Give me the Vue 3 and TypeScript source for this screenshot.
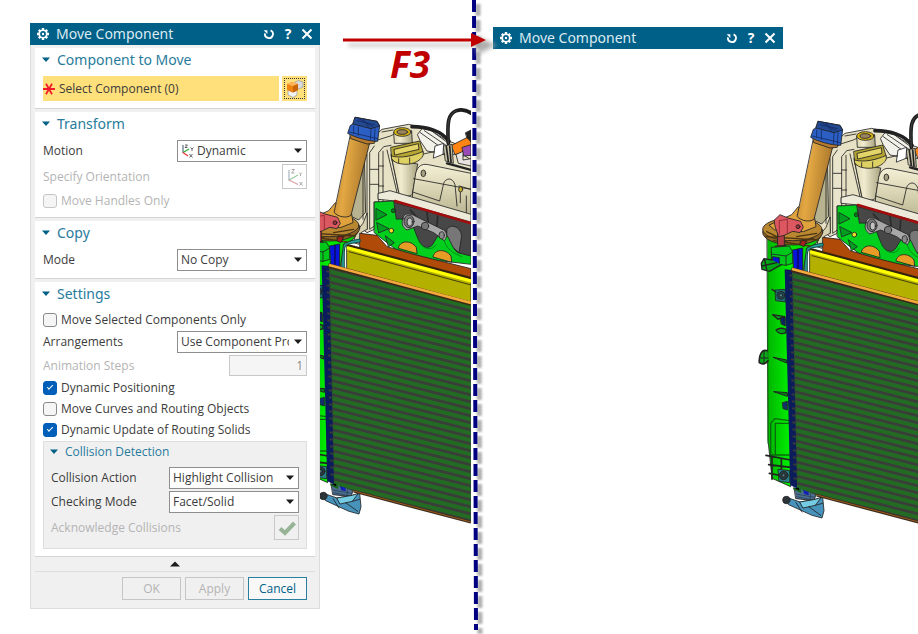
<script setup lang="ts">
import { ref } from 'vue'

interface Stripe {
  x1: number
  y1: number
  x2: number
  y2: number
}

const motion = ref('Dynamic')
const copyMode = ref('No Copy')
const handlesOnly = ref(false)
const selectedOnly = ref(false)
const arrangement = ref('Use Component Properties')
const steps = ref(1)
const dynamicPositioning = ref(true)
const moveCurves = ref(false)
const dynamicUpdate = ref(true)
const collisionAction = ref('Highlight Collision')
const checkingMode = ref('Facet/Solid')

// Fins of the radiator core, drawn parallel and clipped to the core outline
const fins: Stripe[] = Array.from({ length: 36 }, (_, i) => ({
  x1: 120,
  y1: 544 + i * 21,
  x2: 560,
  y2: 656 + i * 21,
}))

// Short teeth along the navy side plate
const teeth: number[] = Array.from({ length: 30 }, (_, i) => 556 + i * 21)
</script>

<template>
  <main class="page">
    <svg class="defs" aria-hidden="true">
      <defs>
        <linearGradient id="tube" x1="0" x2="1" y1="0" y2=".25">
          <stop offset="0" stop-color="#b87f2c" />
          <stop offset=".4" stop-color="#e3a843" />
          <stop offset="1" stop-color="#a8742a" />
        </linearGradient>
        <linearGradient id="neck" x1="0" x2="1">
          <stop offset="0" stop-color="#dcd6b2" />
          <stop offset=".35" stop-color="#f1ecd0" />
          <stop offset="1" stop-color="#a9a480" />
        </linearGradient>
        <linearGradient id="dome" x1="0" x2="0" y1="0" y2="1">
          <stop offset="0" stop-color="#f4f0d6" />
          <stop offset=".45" stop-color="#dad5b4" />
          <stop offset="1" stop-color="#b5b08c" />
        </linearGradient>
        <linearGradient id="tank" x1="0" x2="1">
          <stop offset="0" stop-color="#00b400" />
          <stop offset=".4" stop-color="#00ec00" />
          <stop offset="1" stop-color="#00d000" />
        </linearGradient>
        <clipPath id="core-clip">
          <path d="M124 542L552 655V1308L200 1216L138 1190Z" />
        </clipPath>
        <symbol id="model" viewBox="0 0 552 1350">
          <g stroke="#222" stroke-width="2.5" stroke-linejoin="round" stroke-linecap="round">
            <!-- engine housing -->
            <path d="M240 185L262 150L285 130L365 115L420 128L484 165L552 190V420L324 350L262 348V430L240 440L190 400V345Z" fill="#e7e2c6" />
            <path d="M232 220L190 345V390L215 402L235 380Z" fill="#b7b28f" />
            <path d="M262 180L248 200V430L262 420V348H275V200L290 182L312 178" fill="#e9e5cc" />
            <path d="M228 230V400M240 205V430M288 196V345M300 192L330 320M312 205L335 318M250 250H275M250 295H275M262 165L310 150L330 140M285 138L318 132M275 240H290M275 300H290" fill="none" />
            <path d="M392 145L405 128L430 132L482 170L478 205L420 195L400 165Z" fill="#f3f2ea" />
            <path d="M400 140L470 190M412 134L480 180M405 205L450 195L480 210L520 200L552 222" fill="none" />
            <!-- hoses -->
            <path d="M375 122C420 122 465 135 486 166" fill="none" stroke="#222" stroke-width="11" />
            <path d="M484 172C480 105 484 84 508 74C528 68 543 74 556 84" fill="none" stroke="#1d1d1d" stroke-width="11" />
            <path d="M484 172C480 105 484 84 508 74" fill="none" stroke="#555" stroke-width="2" />
            <path d="M494 178L545 152L552 172V190L505 206Z" fill="#ff8414" />
            <path d="M536 140L552 132V166L540 156Z" fill="#222" />
            <path d="M526 184L552 176V208L530 210Z" fill="#9a4bb5" />
            <path d="M508 205L528 196V222L552 218V240L515 232Z" fill="#e8e3e0" />
            <path d="M470 180L495 175L499 232L476 225Z" fill="#c9c4a8" />
            <path d="M478 182L484 226M488 180L492 228" stroke="#222" stroke-width="5" />
            <path d="M445 180L470 172L468 205L440 216Z" fill="#fff" />
            <path d="M480 232L552 252" stroke="#222" stroke-width="7" />
            <!-- filler openings -->
            <path d="M320 140L322 172H376L374 135Z" fill="url(#neck)" />
            <ellipse cx="346" cy="138" rx="26" ry="13" fill="#d8b515" />
            <ellipse cx="346" cy="138" rx="16" ry="7" fill="#9b8460" />
            <path d="M316 225L336 322C352 334 368 332 376 325L392 235Z" fill="url(#neck)" />
            <path d="M312 184L398 165L409 200L316 224Z" fill="#b6a532" />
            <path d="M322 190L394 173L396 190L324 207Z" fill="#e3d568" />
            <path d="M314 210C340 218 380 210 408 196L409 207C400 228 370 238 345 234C330 233 318 226 314 218Z" fill="#ded163" />
            <path d="M335 218V231M368 216V232" fill="none" />
            <!-- expansion tank -->
            <path d="M377 320L386 262C392 240 404 232 424 236L552 262V396L377 345Z" fill="url(#dome)" />
            <path d="M377 318L458 345L470 292C476 276 496 272 504 296L510 360M380 278L552 310M516 300L552 310M520 318V350M538 330V392" fill="none" />
            <ellipse cx="409" cy="262" rx="7" ry="10" fill="#a5a080" />
            <ellipse cx="521" cy="310" rx="6" ry="8" fill="#c9b32e" />
            <path d="M274 322L309 314L552 385V408L324 345L274 340Z" fill="#edead9" />
            <!-- block interior -->
            <path d="M324 350L552 412V530L380 490L324 420Z" fill="#474747" />
            <path d="M324 345L552 412" stroke="#a20c0c" stroke-width="8" />
            <path d="M370 372L395 400M420 380L425 420M452 390L450 420" stroke="#2b2b2b" stroke-width="5" />
            <path d="M480 430C490 412 520 420 524 450L516 500L480 470Z" fill="#777" />
            <path d="M262 348L320 345L328 400C350 395 366 410 380 425C392 455 398 482 420 484C445 484 440 450 468 440C490 448 488 480 512 500L552 510V535L440 522L340 500L300 470L262 440Z" fill="#00cf1e" />
            <path d="M268 368L300 386L268 402ZM270 410L306 428L276 440ZM296 450L322 470L305 482Z" fill="#009e20" />
            <path d="M392 456C400 486 430 500 448 476M470 455C474 490 500 502 525 512" fill="none" stroke="#0a7c18" />
            <circle cx="319" cy="374" r="6" fill="#007f18" />
            <circle cx="313" cy="434" r="7" fill="#f1e12a" />
            <path d="M348 398C348 382 366 380 380 388L470 432C482 440 480 456 472 464L440 440L392 420L360 432C346 424 342 410 348 398Z" fill="#a8a8a8" />
            <ellipse cx="366" cy="406" rx="15" ry="19" fill="#777" />
            <ellipse cx="368" cy="408" rx="8" ry="12" fill="#c2c2c2" />
            <circle cx="414" cy="420" r="11" fill="#777" />
            <ellipse cx="464" cy="448" rx="8" ry="11" fill="#888" />
            <path d="M334 486C338 464 370 460 388 484L390 502ZM438 512C442 490 474 486 492 510L494 528Z" fill="#e79c26" />
            <!-- bracket and shroud -->
            <path d="M240 382L228 412L206 440L200 470L216 475L222 440L240 430Z" fill="#d8d2b0" />
            <path d="M219 442L270 448L300 482L380 505L552 548V580L380 540L219 488Z" fill="#b04a08" />
            <path d="M180 482L552 586V660L180 560Z" fill="#b3b000" />
            <path d="M182 478L552 577" stroke="#33250b" stroke-width="8" />
            <path d="M184 486L552 585" stroke="#ffff00" stroke-width="10" />
            <path d="M186 497L552 597" stroke="#44400a" stroke-width="3" />
            <path d="M216 464L184 470C170 474 168 484 168 500V548" fill="none" stroke="#174f4c" stroke-width="11" />
            <path d="M216 464L184 470C170 474 168 484 168 500V548" fill="none" stroke="#27a095" stroke-width="5" />
            <!-- left tank -->
            <path d="M52 440H212L196 462L170 474L160 545L112 545L122 1190L66 1165L54 1050Z" fill="url(#tank)" />
            <path d="M128 480L158 474V545L132 538Z" fill="#0713d8" />
            <path d="M144 478V540" stroke="#0a0a55" stroke-width="4" />
            <ellipse cx="128" cy="427" rx="90" ry="38" fill="#8c6122" />
            <ellipse cx="127" cy="418" rx="89" ry="34" fill="#b98730" />
            <path d="M58 405L125 374L145 350L194 384L198 410L160 425L75 420Z" fill="#dfa23c" />
            <path d="M48 440L205 450M70 452L180 468M50 425L110 455M140 440L200 430M150 456L190 446" stroke="#4c3510" stroke-width="4" fill="none" />
            <!-- filler tube -->
            <path d="M190 152L249 167L192 388C178 398 152 392 142 380Z" fill="url(#tube)" />
            <path d="M188 140L268 158L262 172L240 174L192 158Z" fill="#b77b2f" />
            <path d="M205 94L270 106L278 120L272 166C240 166 200 152 182 142L190 118L198 114Z" fill="#2b5fc4" />
            <path d="M205 94L270 106L278 120L252 128L198 114Z" fill="#234993" />
            <path d="M200 120V142M214 122V148M252 130L250 162M264 128L262 164M210 104L262 116M215 98L258 122M228 98L245 124M186 138L272 158" fill="none" stroke="#142b63" />
            <!-- side fitting -->
            <path d="M84 425H103V470H84Z" fill="#b13d44" />
            <path d="M73 390L90 374L114 384L152 394L160 412L150 428L128 424L103 436L86 440L76 412Z" fill="#dc5860" />
            <path d="M88 392L112 388V430M88 392V432" fill="none" stroke="#8d2830" />
            <circle cx="144" cy="410" r="6" fill="#9b3037" />
            <path d="M76 468L108 466L116 478L84 482ZM156 450L170 454L162 470L150 464Z" fill="#a32020" />
            <path d="M65 472L118 468L128 486V520L108 526L66 520Z" fill="#00c81b" />
            <path d="M65 492L108 498L128 486M108 498V526" fill="none" />
            <path d="M69 500L88 503V524L69 521Z" fill="#0714d4" />
            <path d="M66 510L42 506L34 520L36 538L58 544L94 524" fill="#00a516" stroke-width="4" />
            <path d="M36 528L80 518M44 508L50 540" fill="none" stroke-width="4" />
            <!-- tank details -->
            <path d="M54 540V1060" stroke="#087908" />
            <path d="M76 600L106 598V636L78 632Z" fill="#207078" />
            <circle cx="93" cy="616" r="12" fill="#24464f" />
            <circle cx="93" cy="616" r="5" fill="#4c8995" />
            <path d="M66 598L78 606M68 674L104 680L84 688ZM78 720C88 712 98 714 108 718V728C96 734 84 730 78 720Z" fill="#079c1a" stroke-width="4" />
            <path d="M92 684L106 682V708L94 702Z" fill="#11255d" />
            <path d="M52 782C36 776 26 796 28 818C38 826 50 820 54 812" fill="#0caa1a" stroke-width="5" />
            <path d="M42 784V820M28 804H54" stroke-width="3" />
            <path d="M70 802L110 810V818ZM72 905L112 908V918Z" fill="#0a7716" stroke-width="3" />
            <path d="M98 938L112 934V960L100 956Z" fill="#12306b" />
            <path d="M62 1100V1000L74 986L118 992M76 1096V1000H118M62 1095H120" fill="none" stroke="#096b0c" stroke-width="4" />
            <path d="M48 1096L122 1110M56 1124L122 1132M58 1150L100 1158M66 1100V1168M94 1106V1150" fill="none" stroke-width="5" />
            <path d="M85 1138L119 1142V1178L88 1174Z" fill="#2a7f8c" />
            <circle cx="101" cy="1156" r="13" fill="#263b42" />
            <circle cx="101" cy="1156" r="5" fill="#567880" />
            <!-- lower mount -->
            <path d="M132 1186L200 1208L192 1232L138 1226Z" fill="#4d6f92" />
            <path d="M132 1196L152 1206L148 1190M158 1198L172 1212" stroke="#17651a" stroke-width="5" />
            <path d="M138 1212L194 1222M140 1220L190 1230M182 1208L180 1230" stroke="#2c4258" />
            <path d="M160 1200L176 1204V1216L162 1212Z" fill="#1220b8" stroke="none" />
            <path d="M110 1222L150 1236L196 1228L218 1222L222 1262L216 1284L186 1276L116 1244Z" fill="#4793bb" />
            <path d="M150 1236L196 1228L214 1222L196 1246L160 1254Z" fill="#75cce2" />
            <path d="M138 1238L156 1266M176 1250L212 1276M196 1246L218 1240" fill="none" />
            <circle cx="109" cy="1230" r="11" fill="#2c343a" />
          </g>
          <!-- radiator core -->
          <path d="M124 542L552 655V1308L200 1216L138 1190Z" fill="#236b23" />
          <g clip-path="url(#core-clip)" stroke="#3a3d3a" stroke-width="8">
            <line v-for="(f, i) in fins" :key="i" :x1="f.x1" :y1="f.y1" :x2="f.x2" :y2="f.y2" />
          </g>
          <path d="M104 538L126 540L141 1194L121 1186Z" fill="#0b1c5c" />
          <g stroke="#34393a" stroke-width="6">
            <line v-for="(y, i) in teeth" :key="i" :x1="118 + i * 0.42" :y1="y" :x2="130 + i * 0.42" :y2="y + 2" />
          </g>
          <path d="M124 538L552 653" stroke="#3a2a12" stroke-width="13" />
          <path d="M126 537L552 651" stroke="#f4a83d" stroke-width="8" />
          <path d="M200 1216L552 1309" stroke="#3a2c1c" stroke-width="8" />
          <path d="M200 1215L552 1308" stroke="#9c5a1c" stroke-width="3" />
        </symbol>
        <symbol id="gear" viewBox="0 0 14 14">
          <path d="M7 1V13M1 7H13M2.8 2.8L11.2 11.2M11.2 2.8L2.8 11.2" stroke="#fff" stroke-width="2.4" />
          <circle cx="7" cy="7" r="4.6" fill="#fff" />
          <circle cx="7" cy="7" r="2.9" fill="#006088" />
          <circle cx="7" cy="7" r="1.2" fill="#fff" />
        </symbol>
        <symbol id="reset" viewBox="0 0 12 12">
          <path d="M7.6 2.4A4 4 0 1 1 2 5.4" fill="none" stroke="#fff" stroke-width="1.8" />
          <path d="M.6 2.2H4.4V6Z" fill="#fff" />
        </symbol>
        <symbol id="cross" viewBox="0 0 12 12">
          <path d="M1.5 1.5L10.5 10.5M10.5 1.5L1.5 10.5" stroke="#fff" stroke-width="2" />
        </symbol>
        <symbol id="down" viewBox="0 0 10 6">
          <path d="M1 .5H9L5 5Z" />
        </symbol>
      </defs>
    </svg>

    <section class="scene" aria-label="Full dialog">
      <svg class="model before" aria-hidden="true"><use href="#model" /></svg>
      <form class="dialog" @submit.prevent>
        <header class="titlebar">
          <svg class="gear"><use href="#gear" /></svg>
          <h1>Move Component</h1>
          <button type="button" aria-label="Reset"><svg><use href="#reset" /></svg></button>
          <button type="button" aria-label="Help">?</button>
          <button type="button" aria-label="Close"><svg><use href="#cross" /></svg></button>
        </header>

        <div class="groups">
          <section class="group">
            <h2><svg class="caret"><use href="#down" /></svg>Component to Move</h2>
            <div class="pick">
              <div class="pick-label">
                <svg class="star" viewBox="0 0 12 12"><path d="M0 6H12M3 .8L9 11.2M9 .8L3 11.2" stroke="#f21d2b" stroke-width="1.8" /></svg>
                Select Component (0)
              </div>
              <button type="button" class="pick-button" aria-label="Select Component">
                <svg viewBox="0 0 18 18">
                  <path d="M9 2L13 .5L17 2V7L13 9L9 7Z" fill="#d8dadd" stroke="#8c9096" stroke-width=".6" />
                  <path d="M2 10L7 12L11 10V15L7 17.5L2 15Z" fill="#f1f1f1" stroke="#85898e" stroke-width=".6" />
                  <path d="M1 4L6 2L12 4V10L7 12.4L1 10Z" fill="#ee8412" />
                  <path d="M1 4L6 2L12 4L7 6Z" fill="#ffb45a" />
                  <path d="M7 6L12 4V10L7 12.4Z" fill="#c96408" />
                </svg>
              </button>
            </div>
          </section>

          <section class="group">
            <h2><svg class="caret"><use href="#down" /></svg>Transform</h2>
            <div class="row">
              <label for="motion">Motion</label>
              <span class="choice with-icon">
                <select id="motion" v-model="motion"><option>Dynamic</option></select>
                <svg class="axes" viewBox="0 0 14 14">
                  <path d="M2 1V9" stroke="#5b6f86" stroke-width="1.2" />
                  <path d="M2 8.500L8 5" stroke="#2fae3c" stroke-width="1.4" />
                  <path d="M2 8.500L7 12" stroke="#ee3b3b" stroke-width="1.4" />
                  <path d="M4 1H6.500L4 3.500H6.500M9.500 3.500L11 5L12.500 3.500M11 5V7M8.500 10L11.500 13.500M11.500 10L8.500 13.500" fill="none" stroke="#555" stroke-width=".9" />
                </svg>
                <svg class="drop"><use href="#down" /></svg>
              </span>
            </div>
            <div class="row dim">
              <span>Specify Orientation</span>
              <button type="button" class="square" disabled aria-label="Specify Orientation">
                <svg viewBox="0 0 18 18">
                  <path d="M3 2V13" stroke="#a9b6c2" stroke-width="1.2" />
                  <path d="M3 12L12 7" stroke="#9bc9a0" stroke-width="1.2" />
                  <path d="M3 12L12 16.500" stroke="#dba0a0" stroke-width="1.2" />
                  <path d="M5.500 1.500H8.500L5.500 5H8.500M13 4.500L14.500 6L16 4.500M14.500 6V8M13.500 14L16.500 17.500M16.500 14L13.500 17.500" fill="none" stroke="#aaa" />
                </svg>
              </button>
            </div>
            <label class="check dim"><input v-model="handlesOnly" type="checkbox" disabled />Move Handles Only</label>
          </section>

          <section class="group">
            <h2><svg class="caret"><use href="#down" /></svg>Copy</h2>
            <div class="row">
              <label for="mode">Mode</label>
              <span class="choice">
                <select id="mode" v-model="copyMode"><option>No Copy</option></select>
                <svg class="drop"><use href="#down" /></svg>
              </span>
            </div>
          </section>

          <section class="group">
            <h2><svg class="caret"><use href="#down" /></svg>Settings</h2>
            <label class="check"><input v-model="selectedOnly" type="checkbox" />Move Selected Components Only</label>
            <div class="row">
              <label for="arrangements">Arrangements</label>
              <span class="choice">
                <select id="arrangements" v-model="arrangement"><option>Use Component Properties</option></select>
                <svg class="drop"><use href="#down" /></svg>
              </span>
            </div>
            <div class="row dim">
              <label for="steps">Animation Steps</label>
              <input id="steps" v-model="steps" class="number" type="text" disabled />
            </div>
            <label class="check"><input v-model="dynamicPositioning" type="checkbox" />Dynamic Positioning</label>
            <label class="check"><input v-model="moveCurves" type="checkbox" />Move Curves and Routing Objects</label>
            <label class="check"><input v-model="dynamicUpdate" type="checkbox" />Dynamic Update of Routing Solids</label>
            <section class="subgroup">
              <h3><svg class="caret"><use href="#down" /></svg>Collision Detection</h3>
              <div class="row">
                <label for="action">Collision Action</label>
                <span class="choice">
                  <select id="action" v-model="collisionAction"><option>Highlight Collision</option></select>
                  <svg class="drop"><use href="#down" /></svg>
                </span>
              </div>
              <div class="row">
                <label for="checking">Checking Mode</label>
                <span class="choice">
                  <select id="checking" v-model="checkingMode"><option>Facet/Solid</option></select>
                  <svg class="drop"><use href="#down" /></svg>
                </span>
              </div>
              <div class="row dim">
                <span>Acknowledge Collisions</span>
                <button type="button" class="square" disabled aria-label="Acknowledge Collisions">
                  <svg viewBox="0 0 18 18"><path d="M2 9.500L7 14L16.500 4" fill="none" stroke="#97b497" stroke-width="4" /></svg>
                </button>
              </div>
            </section>
          </section>
        </div>

        <button type="button" class="collapse" aria-label="Show less">
          <svg viewBox="0 0 10 6"><path d="M0 5.500H10L5 .5Z" /></svg>
        </button>
        <footer class="actions">
          <button type="button" disabled>OK</button>
          <button type="button" disabled>Apply</button>
          <button type="button" class="primary">Cancel</button>
        </footer>
      </form>
    </section>

    <section class="scene" aria-label="Collapsed dialog">
      <svg class="model after" aria-hidden="true"><use href="#model" /></svg>
      <header class="titlebar collapsed">
        <svg class="gear"><use href="#gear" /></svg>
        <h1>Move Component</h1>
        <button type="button" aria-label="Reset"><svg><use href="#reset" /></svg></button>
        <button type="button" aria-label="Help">?</button>
        <button type="button" aria-label="Close"><svg><use href="#cross" /></svg></button>
      </header>
      <svg class="divider" viewBox="0 0 20 634" aria-hidden="true">
        <path class="divider-shadow" d="M8 4L10 634" />
        <path class="divider-line" d="M4 0L6 630" />
      </svg>
      <div class="callout">
        <svg viewBox="0 0 170 26" aria-hidden="true">
          <path class="arrow-shadow" d="M8 15H144M138 8L154 15L138 23Z" />
          <path d="M3 10H134" stroke="#c00000" stroke-width="3" />
          <path d="M131 3L146 10L131 17Z" fill="#c00000" />
        </svg>
        <strong>F3</strong>
      </div>
    </section>
  </main>
</template>

<style>
body {
  background: #fff;
}
</style>

<style scoped>
.page {
  display: grid;
  grid-template-columns: minmax(0, 472fr) minmax(0, 446fr);
  min-height: 100vh;
  overflow: hidden;
  font: 12px/18px "Open Sans", "Noto Sans", sans-serif;
  color: #3c3c3c;
}
.defs {
  position: absolute;
  width: 0;
  height: 0;
}
.scene {
  position: relative;
}
.model {
  position: absolute;
  width: 184px;
  height: 450px;
}
.model.before {
  top: 86px;
  left: 287px;
}
.model.after {
  top: 90px;
  left: 278px;
}
.dialog {
  position: relative;
  width: 290px;
  margin: 23px 0 0 30px;
  background: #f0f0f0;
  box-shadow: inset 0 0 0 1px #dcdcdc;
}
h1,
h2,
h3 {
  margin: 0;
  font-weight: 400;
}
button {
  padding: 0;
  font: inherit;
}
.titlebar {
  position: relative;
  box-sizing: border-box;
  display: flex;
  align-items: center;
  height: 22px;
  padding: 0 7px 0 6px;
  background: #006088;
  color: #fff;
}
.titlebar.collapsed {
  width: 290px;
  margin: 27px 0 0 21px;
}
.titlebar h1 {
  flex: 1;
  margin-left: 6px;
  font-family: "Noto Sans", "Open Sans", sans-serif;
  font-size: 14px;
  line-height: 22px;
  color: #dcebf1;
}
.titlebar button {
  display: grid;
  place-items: center;
  width: 12px;
  height: 20px;
  margin-left: 7px;
  border: 0;
  background: none;
  color: #fff;
  font-size: 14px;
  font-weight: 700;
}
.titlebar button svg {
  width: 12px;
  height: 12px;
}
.gear {
  width: 14px;
  height: 14px;
}
.groups {
  display: grid;
  gap: 3px;
  padding: 3px 5px 0;
}
.group {
  display: grid;
  gap: 2px;
  padding: 0 8px 7px;
  border-bottom: 1px solid #d4d4d4;
  background: #fff;
}
h2 {
  display: flex;
  align-items: center;
  height: 24px;
  margin-bottom: 2px;
  color: #287b9c;
  font-family: "Noto Sans", "Open Sans", sans-serif;
  font-size: 14px;
}
h3 {
  display: flex;
  align-items: center;
  height: 19px;
  margin-bottom: 4px;
  color: #287b9c;
  font-size: 12px;
}
.caret {
  width: 10px;
  height: 6px;
  margin: 0 6px 0 -2px;
  fill: #006088;
}
.pick {
  display: flex;
  gap: 3px;
  height: 25px;
}
.pick-label {
  flex: 1;
  display: flex;
  align-items: center;
  gap: 4px;
  background: #ffe07a;
}
.star {
  width: 12px;
  height: 12px;
}
.pick-button {
  display: grid;
  place-items: center;
  width: 25px;
  border: 0;
  background: #ffe07a;
  outline: 1px dotted #333;
  outline-offset: -3px;
}
.pick-button svg {
  width: 18px;
  height: 18px;
}
.row {
  display: flex;
  align-items: center;
  justify-content: space-between;
}
.dim {
  color: #b4b4b4;
}
.choice {
  display: grid;
  align-items: center;
  width: 130px;
}
.choice > * {
  grid-area: 1 / 1;
}
select {
  appearance: none;
  box-sizing: border-box;
  width: 100%;
  height: 22px;
  padding: 0 17px 0 3px;
  border: 1px solid #8e8e8e;
  border-radius: 0;
  background: #fff;
  color: #3c3c3c;
  font: inherit;
}
.with-icon select {
  padding-left: 19px;
}
.axes {
  width: 14px;
  height: 14px;
  margin-left: 4px;
  pointer-events: none;
}
.drop {
  justify-self: end;
  width: 10px;
  height: 6px;
  margin-right: 4px;
  fill: #1c1c1c;
  pointer-events: none;
}
.square {
  display: grid;
  place-items: center;
  box-sizing: border-box;
  width: 25px;
  height: 25px;
  border: 1px solid #c8c8c8;
  background: none;
}
.square svg {
  width: 18px;
  height: 18px;
}
.check {
  display: flex;
  align-items: center;
  gap: 4px;
  height: 19px;
}
.check input {
  appearance: none;
  box-sizing: border-box;
  display: grid;
  place-items: center;
  width: 14px;
  height: 14px;
  margin: 0;
  border: 1px solid #8a8a8a;
  border-radius: 3px;
  background: #f5f5f5;
}
.check input:disabled {
  border-color: #c6c6c6;
}
.check input:checked {
  border-color: #005fb8;
  background: #005fb8;
}
.check input:checked::after {
  content: "";
  width: 5px;
  height: 2px;
  margin-bottom: 2px;
  border: solid #fff;
  border-width: 0 0 1px 1px;
  transform: rotate(-45deg);
}
.number {
  box-sizing: border-box;
  width: 78px;
  height: 21px;
  padding: 0 3px;
  border: 1px solid #c8c8c8;
  background: #f5f5f5;
  color: #8a8a8a;
  font: inherit;
  text-align: right;
}
.subgroup {
  display: grid;
  gap: 2px;
  padding: 0 7px 8px;
  border: 1px solid #dedede;
  background: #f0f0f0;
}
.collapse {
  display: grid;
  place-items: center;
  width: 280px;
  height: 15px;
  margin: 0 5px;
  border: 0;
  border-bottom: 1px solid #dedede;
  background: none;
}
.collapse svg {
  width: 10px;
  height: 6px;
  fill: #1c1c1c;
}
.actions {
  display: flex;
  justify-content: flex-end;
  gap: 4px;
  padding: 5px 13px 9px;
}
.actions button {
  box-sizing: border-box;
  width: 59px;
  height: 23px;
  border: 1px solid #c6c6c6;
  background: #f0f0f0;
  color: #b4b4b4;
}
.actions .primary {
  border-color: #2a7f9e;
  background: #f8f8f8;
  color: #006088;
}
.divider {
  position: absolute;
  top: 0;
  left: -2px;
  width: 20px;
  height: 634px;
}
.divider path {
  fill: none;
  stroke-dasharray: 12 4;
}
.divider-line {
  stroke: #000080;
  stroke-width: 4;
}
.divider-shadow {
  stroke: #b0b0b0;
  stroke-width: 5;
  filter: blur(1px);
}
.callout {
  position: absolute;
  top: 30px;
  left: -132px;
  width: 170px;
}
.callout svg {
  display: block;
  width: 170px;
  height: 26px;
}
.callout .arrow-shadow {
  fill: #777;
  stroke: #aaa;
  stroke-width: 3;
  opacity: 0.7;
  filter: blur(2px);
}
.callout strong {
  display: block;
  margin: -11px 0 0 50px;
  color: #c00000;
  font: italic 700 37px/38px "Open Sans", sans-serif;
}
</style>
